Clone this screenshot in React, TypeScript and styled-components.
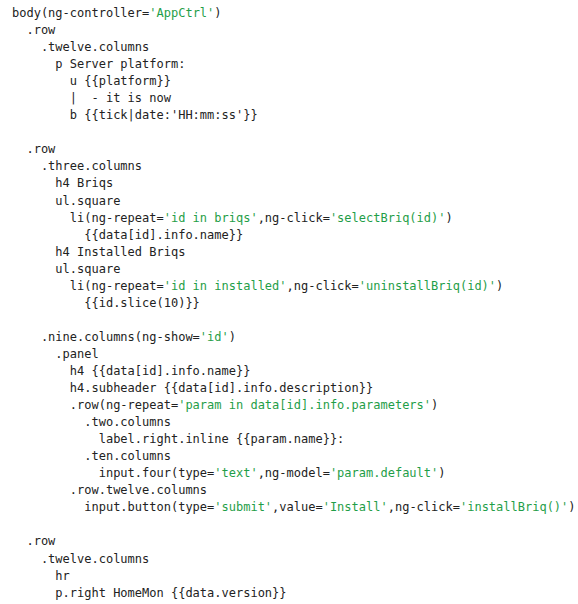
import React from "react";
import styled, { createGlobalStyle } from "styled-components";

const Global = createGlobalStyle`
  html, body { margin: 0; padding: 0; background: #ffffff; }
`;

const Code = styled.pre`
  margin: 0;
  padding: 5px 0 0 12px;
  font-family: "DejaVu Sans Mono", "Liberation Mono", monospace;
  font-size: 12px;
  line-height: 17.06px;
  color: #222222;
  white-space: pre;
`;

const Line = styled.div<{ $indent: number }>`
  padding-left: ${(p) => p.$indent * 7.225}px;
  height: 17.06px;
`;

const Str = styled.span`
  color: #1f9e48;
`;

type Seg = string | { s: string };
const g = (s: string) => ({ s });

const lines: [number, Seg[]][] = [
  [0, ["body(ng-controller=", g("'AppCtrl'"), ")"]],
  [2, [".row"]],
  [4, [".twelve.columns"]],
  [6, ["p Server platform:"]],
  [8, ["u {{platform}}"]],
  [8, ["|  - it is now"]],
  [8, ["b {{tick|date:'HH:mm:ss'}}"]],
  [0, [""]],
  [2, [".row"]],
  [4, [".three.columns"]],
  [6, ["h4 Briqs"]],
  [6, ["ul.square"]],
  [8, ["li(ng-repeat=", g("'id in briqs'"), ",ng-click=", g("'selectBriq(id)'"), ")"]],
  [10, ["{{data[id].info.name}}"]],
  [6, ["h4 Installed Briqs"]],
  [6, ["ul.square"]],
  [8, ["li(ng-repeat=", g("'id in installed'"), ",ng-click=", g("'uninstallBriq(id)'"), ")"]],
  [10, ["{{id.slice(10)}}"]],
  [0, [""]],
  [4, [".nine.columns(ng-show=", g("'id'"), ")"]],
  [6, [".panel"]],
  [8, ["h4 {{data[id].info.name}}"]],
  [8, ["h4.subheader {{data[id].info.description}}"]],
  [8, [".row(ng-repeat=", g("'param in data[id].info.parameters'"), ")"]],
  [10, [".two.columns"]],
  [12, ["label.right.inline {{param.name}}:"]],
  [10, [".ten.columns"]],
  [12, ["input.four(type=", g("'text'"), ",ng-model=", g("'param.default'"), ")"]],
  [8, [".row.twelve.columns"]],
  [10, ["input.button(type=", g("'submit'"), ",value=", g("'Install'"), ",ng-click=", g("'installBriq()'"), ")"]],
  [0, [""]],
  [2, [".row"]],
  [4, [".twelve.columns"]],
  [6, ["hr"]],
  [6, ["p.right HomeMon {{data.version}}"]],
];

export default function App() {
  return (
    <>
      <Global />
      <Code>
        {lines.map(([indent, segs], i) => (
          <Line key={i} $indent={indent}>
            {segs.map((seg, j) =>
              typeof seg === "string" ? (
                <React.Fragment key={j}>{seg}</React.Fragment>
              ) : (
                <Str key={j}>{seg.s}</Str>
              )
            )}
          </Line>
        ))}
      </Code>
    </>
  );
}
